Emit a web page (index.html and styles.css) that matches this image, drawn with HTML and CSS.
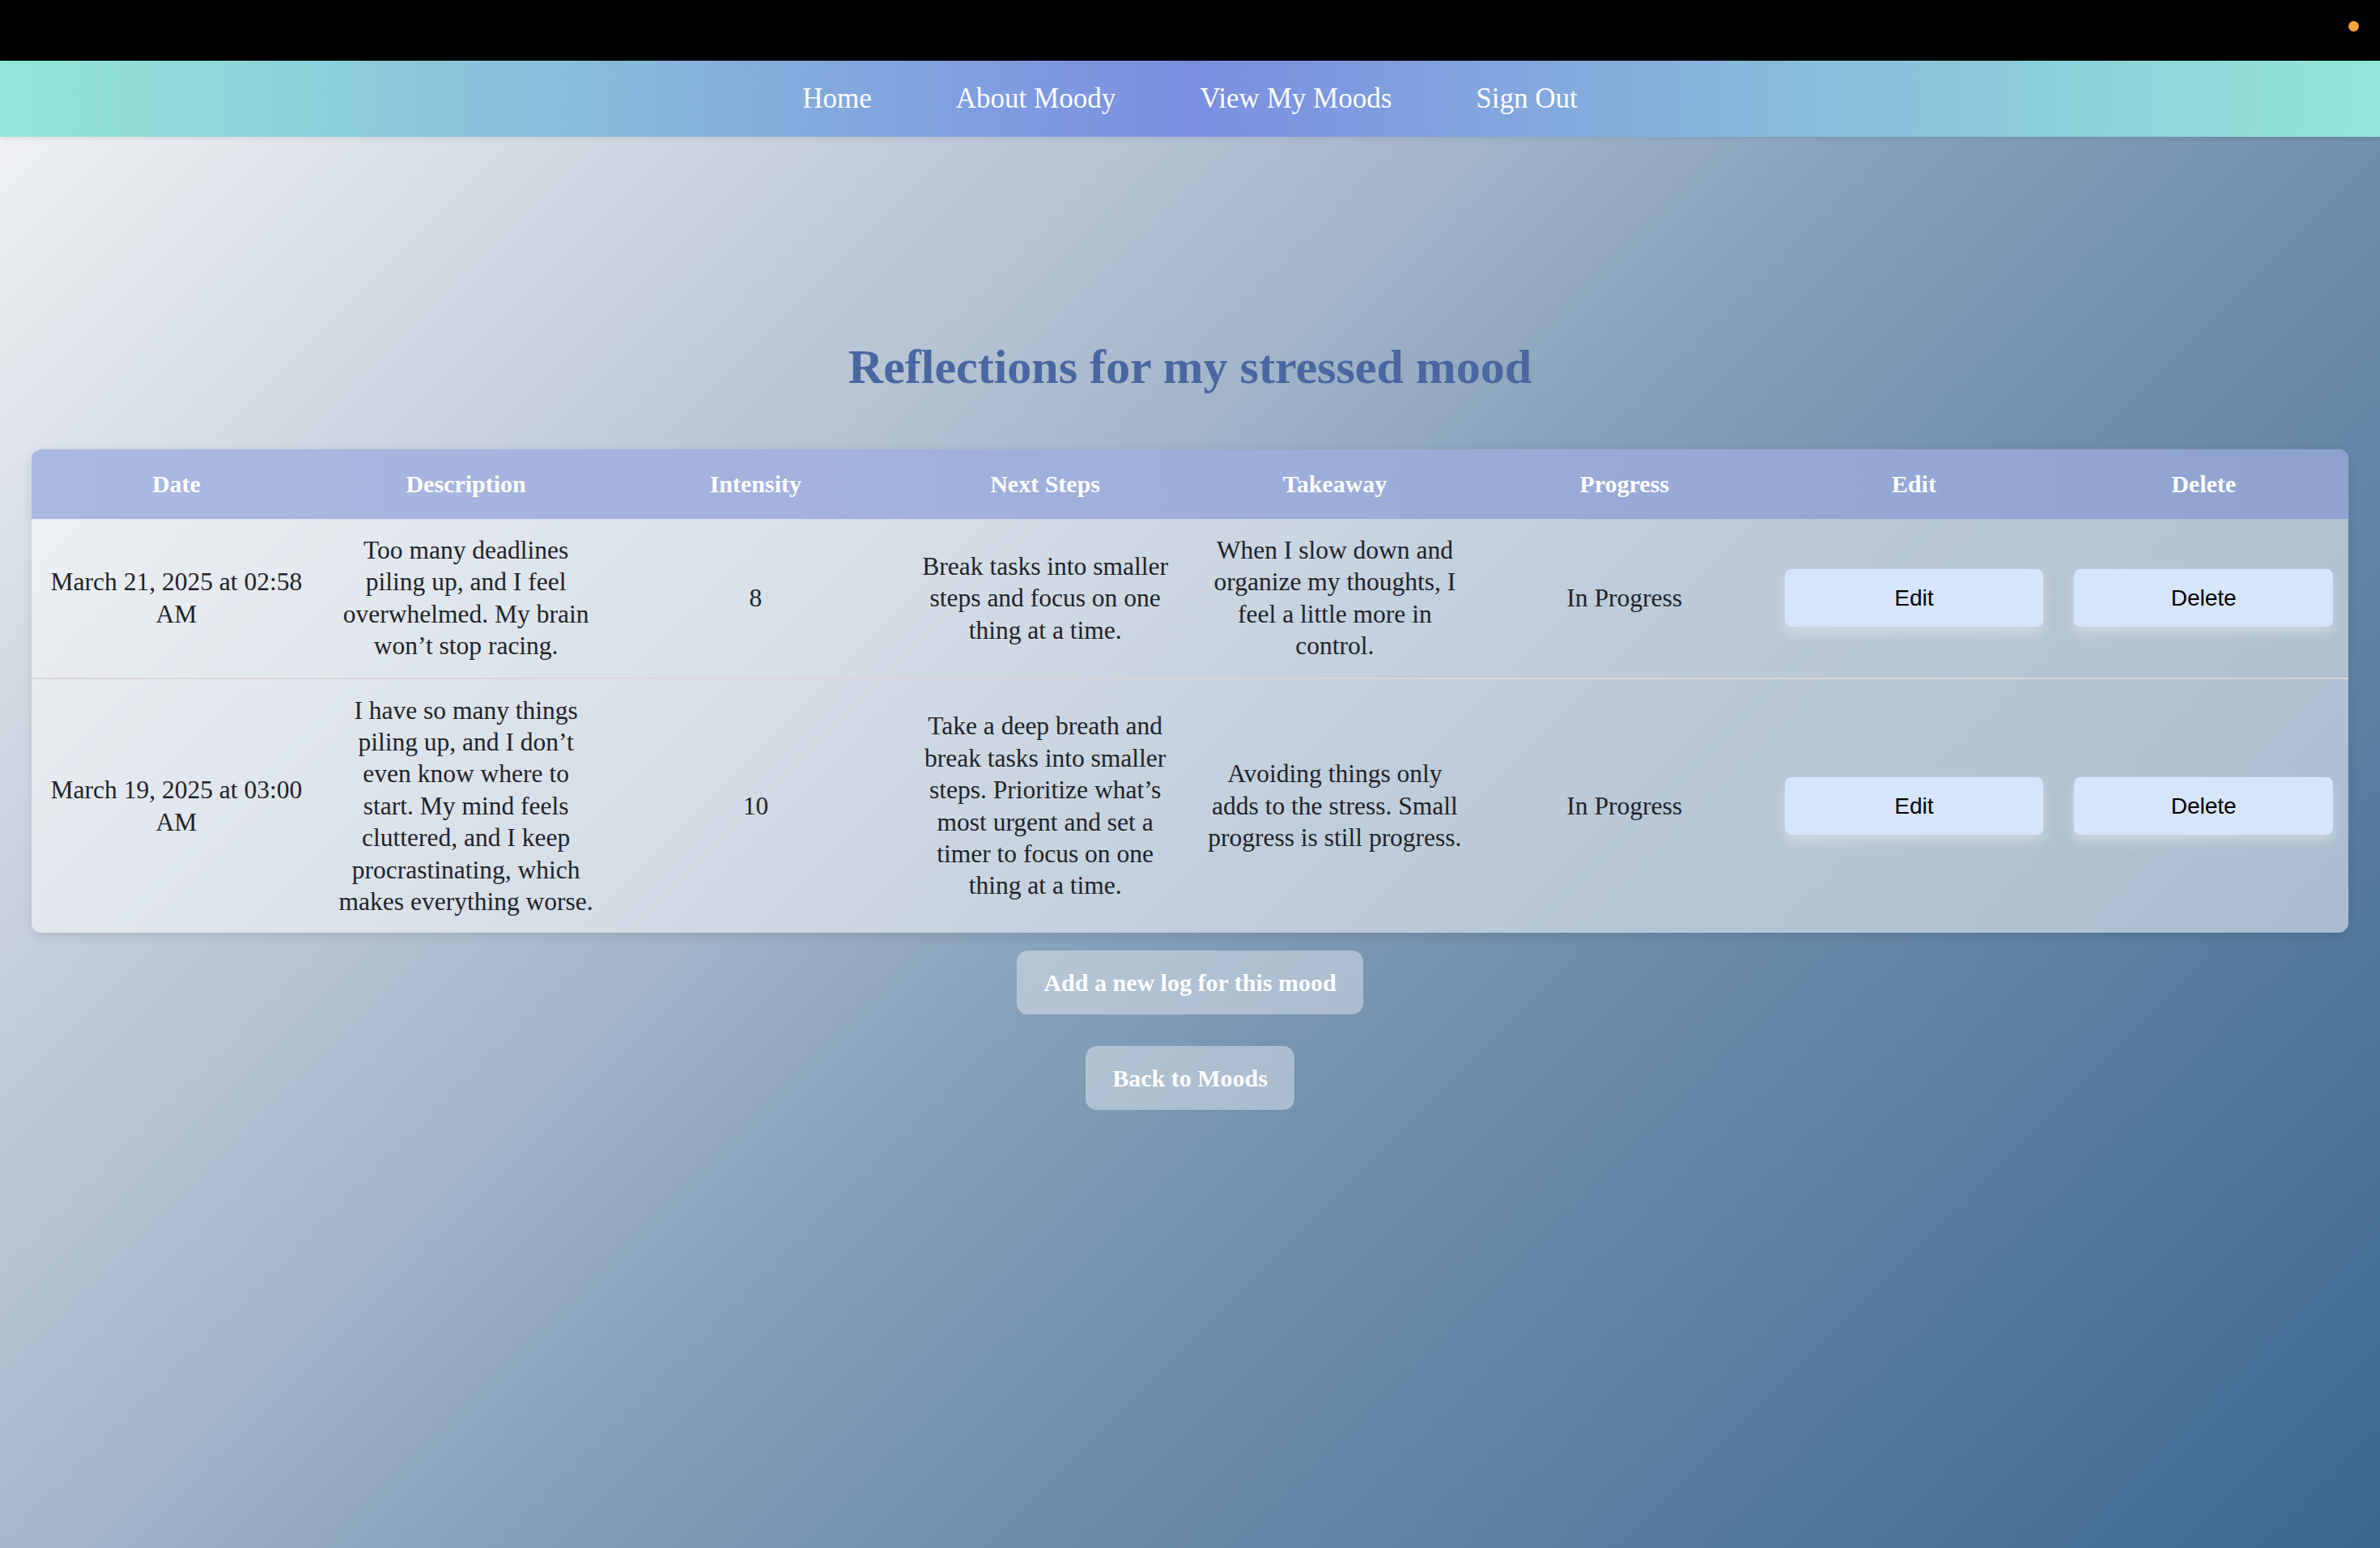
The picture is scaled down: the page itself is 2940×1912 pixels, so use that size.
FILE: index.html
```html
<!DOCTYPE html>
<html lang="en">
<head>
<meta charset="utf-8">
<title>Moody - Reflections</title>
<link rel="stylesheet" href="styles.css">
</head>
<body>
<div class="topbar"><span class="dot"></span></div>
<div class="page">
  <nav class="nav">
    <a href="#" class="nav-link">Home</a>
    <a href="#" class="nav-link">About Moody</a>
    <a href="#" class="nav-link">View My Moods</a>
    <a href="#" class="nav-link">Sign Out</a>
  </nav>
  <main class="main">
    <h1 class="title">Reflections for my stressed mood</h1>
    <div class="table-wrap">
      <table class="logs">
        <thead>
          <tr>
            <th>Date</th>
            <th>Description</th>
            <th>Intensity</th>
            <th>Next Steps</th>
            <th>Takeaway</th>
            <th>Progress</th>
            <th>Edit</th>
            <th>Delete</th>
          </tr>
        </thead>
        <tbody>
          <tr>
            <td>March 21, 2025 at 02:58 AM</td>
            <td>Too many deadlines piling up, and I feel overwhelmed. My brain won’t stop racing.</td>
            <td>8</td>
            <td>Break tasks into smaller steps and focus on one thing at a time.</td>
            <td>When I slow down and organize my thoughts, I feel a little more in control.</td>
            <td>In Progress</td>
            <td><button class="row-btn">Edit</button></td>
            <td><button class="row-btn">Delete</button></td>
          </tr>
          <tr>
            <td>March 19, 2025 at 03:00 AM</td>
            <td>I have so many things piling up, and I don’t even know where to start. My mind feels cluttered, and I keep procrastinating, which makes everything worse.</td>
            <td>10</td>
            <td>Take a deep breath and break tasks into smaller steps. Prioritize what’s most urgent and set a timer to focus on one thing at a time.</td>
            <td>Avoiding things only adds to the stress. Small progress is still progress.</td>
            <td>In Progress</td>
            <td><button class="row-btn">Edit</button></td>
            <td><button class="row-btn">Delete</button></td>
          </tr>
        </tbody>
      </table>
    </div>
    <div class="actions">
      <a href="#" class="action-btn">Add a new log for this mood</a>
      <a href="#" class="action-btn">Back to Moods</a>
    </div>
  </main>
</div>
</body>
</html>
```

FILE: styles.css
```css
* {
  box-sizing: border-box;
}

html, body {
  margin: 0;
  padding: 0;
}

body {
  font-family: "Liberation Serif", "Times New Roman", serif;
  background: #000;
}

.topbar {
  height: 75px;
  background: #000;
  display: flex;
  justify-content: flex-end;
  align-items: flex-start;
  padding: 26px 26px 0 0;
}

.dot {
  width: 13px;
  height: 13px;
  border-radius: 50%;
  background: #f5a63e;
}

.page {
  min-height: calc(100vh - 75px);
  background: linear-gradient(135deg, #f3f4f6 0%, #a8b9cc 38%, #88a2bc 50%, #7390ad 62%, #3b6791 100%);
  display: flex;
  flex-direction: column;
}

.nav {
  height: 94px;
  display: flex;
  justify-content: center;
  align-items: center;
  gap: 104px;
  background: linear-gradient(90deg, #93e7d8 0%, #7b8ee0 50%, #93e7d8 100%);
  box-shadow: 0 2px 6px rgba(0, 0, 0, 0.08);
}

.nav-link {
  color: #fff;
  text-decoration: none;
  font-size: 35px;
  line-height: 40px;
}

.main {
  padding: 248px 39px 0;
  display: flex;
  flex-direction: column;
}

.title {
  margin: 0 0 66px;
  text-align: center;
  font-size: 60px;
  line-height: 72px;
  font-weight: 700;
  color: #4b67a1;
}

.table-wrap {
  border-radius: 12px;
  overflow: hidden;
  background: rgba(255, 255, 255, 0.5);
  box-shadow: 0 4px 14px rgba(0, 0, 0, 0.1);
}

.logs {
  width: 100%;
  table-layout: fixed;
  border-collapse: collapse;
}

.logs thead tr {
  background: linear-gradient(90deg, #aab8e1 0%, #9eaedb 50%, #8fa2cf 100%);
}

.logs th {
  color: #fff;
  font-size: 30px;
  line-height: 40px;
  font-weight: 700;
  padding: 23px 19px;
  text-align: center;
}

.logs td {
  color: #1f2328;
  font-size: 31.5px;
  line-height: 39.4px;
  padding: 19px;
  text-align: center;
  vertical-align: middle;
}

.logs tbody tr + tr td {
  border-top: 2px solid #dad5db;
}

.row-btn {
  display: block;
  width: 100%;
  border: none;
  border-radius: 8px;
  background: #d7e5fb;
  color: #000;
  font-family: "Liberation Sans", Arial, sans-serif;
  font-size: 28px;
  line-height: 33px;
  padding: 19px 10px;
  box-shadow: 0 8px 16px rgba(255, 255, 255, 0.35);
  cursor: pointer;
}

.actions {
  display: flex;
  flex-direction: column;
  align-items: center;
  gap: 39px;
  margin-top: 22px;
}

.action-btn {
  display: block;
  background: rgba(255, 255, 255, 0.38);
  color: #fff;
  text-decoration: none;
  font-size: 30px;
  line-height: 35px;
  font-weight: 700;
  padding: 22px 33px;
  border-radius: 14px;
}
```
